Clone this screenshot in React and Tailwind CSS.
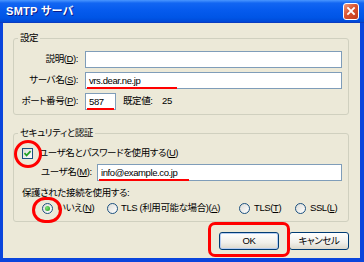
import React from 'react';

const Acc = ({ k }) => (
    <>
        (<span className="underline">{k}</span>)
    </>
);

function TextBox({ className, value, mark }) {
    return (
        <div className={`relative h-[17px] shrink-0 border border-[#7F9DB9] bg-white flex items-center pl-[3px] ${className}`}>
            <span className="leading-[12px]">{value}</span>
            {mark && <span className={`absolute left-[1px] bottom-[-1px] h-[2px] bg-[#F00] ${mark}`} />}
        </div>
    );
}

function Radio({ checked }) {
    return (
        <span className="w-[11px] h-[11px] shrink-0 rounded-full border border-[#1C5180] bg-[linear-gradient(135deg,#DCDCD7,#FFFFFF)] flex items-center justify-center">
            {checked && <span className="w-[5px] h-[5px] rounded-full bg-[radial-gradient(circle_at_35%_35%,#7BE278,#1E9A1B)]" />}
        </span>
    );
}

export default function App() {
    return (
        <div className="w-[364px] h-[262px] bg-[#0A45DC] flex flex-col text-[9.5px] text-black whitespace-nowrap [font-family:'Liberation_Sans','Noto_Sans_CJK_JP',sans-serif] [font-feature-settings:'palt']">
            {/* title bar */}
            <div className="h-[23px] shrink-0 flex items-center justify-between border-b border-[#0B3CC0] bg-[linear-gradient(to_bottom,#4A96FF_0%,#1266F2_14%,#065BEE_45%,#0055E6_80%,#0048D6_100%)]">
                <span className="pl-[6px] text-[11px] font-bold text-white tracking-[0.3px] [text-shadow:1px_1px_#0A1C8C]">SMTP サーバ</span>
                <div className="mr-[5px] w-[16px] h-[17px] rounded-[3px] border border-white bg-[linear-gradient(135deg,#F09A7E,#DA5430_45%,#C0391A)] flex items-center justify-center">
                    <svg width="10" height="10" viewBox="0 0 10 10">
                        <path d="M2 2 L8 8 M8 2 L2 8" stroke="#fff" strokeWidth="1.8" strokeLinecap="square" />
                    </svg>
                </div>
            </div>

            {/* body */}
            <div className="flex-1 ml-[3px] mr-[4px] mb-[4px] bg-[#ECE9D8] pl-[10px] pr-[11px] flex flex-col tracking-[-0.4px]">
                <fieldset className="mt-[9px] w-[336px] border border-[#D0D0BF] rounded-[3px] pt-[7px] pb-[4px] flex flex-col gap-[4px]">
                    <legend className="ml-[4px] px-[2px] leading-[12px]">設定</legend>
                    <div className="flex items-center">
                        <span className="w-[64px] shrink-0 text-right">説明<Acc k="D" />:</span>
                        <TextBox className="ml-[7px] w-[257px]" value="" />
                    </div>
                    <div className="flex items-center">
                        <span className="w-[64px] shrink-0 text-right">サーバ名<Acc k="S" />:</span>
                        <TextBox className="ml-[7px] w-[257px]" value="vrs.dear.ne.jp" mark="w-[90px]" />
                    </div>
                    <div className="flex items-center">
                        <span className="w-[64px] shrink-0 text-right">ポート番号<Acc k="P" />:</span>
                        <TextBox className="ml-[7px] w-[31px]" value="587" mark="w-[27px]" />
                        <span className="ml-[7px] w-[39px]">既定値:</span>
                        <span>25</span>
                    </div>
                </fieldset>

                <fieldset className="mt-[12px] w-[336px] border border-[#D0D0BF] rounded-[3px] pt-[7px] pb-[7px] flex flex-col">
                    <legend className="ml-[4px] px-[2px] leading-[12px]">セキュリティと認証</legend>
                    <div className="h-[14px] pl-[8px] flex items-center">
                        <span className="relative w-[11px] h-[11px] shrink-0 border border-[#1C5180] bg-[linear-gradient(135deg,#DCDCD7,#FFFFFF)] flex items-center justify-center">
                            <svg width="9" height="9" viewBox="0 0 9 9">
                                <path d="M1.5 4.2 L3.6 6.4 L7.6 2.2" fill="none" stroke="#21A121" strokeWidth="1.7" />
                            </svg>
                            <span className="absolute left-[-9px] top-[-9px] w-[28px] h-[28px] rounded-full border-[3px] border-[#F00]" />
                        </span>
                        <span className="ml-[6px]">ユーザ名とパスワードを使用する<Acc k="U" /></span>
                    </div>
                    <div className="mt-[4px] pl-[27px] flex items-center">
                        <span className="w-[56px] shrink-0">ユーザ名<Acc k="M" />:</span>
                        <TextBox className="w-[245px]" value="info@example.co.jp" mark="w-[90px]" />
                    </div>
                    <div className="mt-[6px] h-[12px] pl-[8px] flex items-center">保護された接続を使用する:</div>
                    <div className="mt-[3px] h-[12px] pl-[28px] flex items-center">
                        <div className="w-[65px] shrink-0 flex items-center gap-[4px]">
                            <span className="relative">
                                <Radio checked />
                                <span className="absolute left-[-10px] top-[-6px] w-[30px] h-[26px] rounded-full border-[3px] border-[#F00]" />
                            </span>
                            <span>いいえ<Acc k="N" /></span>
                        </div>
                        <div className="w-[132px] shrink-0 flex items-center gap-[3px]">
                            <Radio />
                            <span>TLS (利用可能な場合)<Acc k="A" /></span>
                        </div>
                        <div className="w-[56px] shrink-0 flex items-center gap-[4px]">
                            <Radio />
                            <span>TLS<Acc k="T" /></span>
                        </div>
                        <div className="flex items-center gap-[4px]">
                            <Radio />
                            <span>SSL<Acc k="L" /></span>
                        </div>
                    </div>
                </fieldset>

                <div className="mt-[10px] flex justify-end gap-[10px]">
                    <div className="relative">
                        <button className="w-[60px] h-[18px] rounded-[3px] border border-[#003C74] bg-[linear-gradient(to_bottom,#FFFFFF,#F0EFEA_60%,#DCD8CC)] shadow-[inset_0_0_0_1px_#B5CCF2] leading-none">OK</button>
                        <span className="absolute left-[-11px] top-[-10px] w-[82px] h-[35px] rounded-[7px] border-[3px] border-[#F00]" />
                    </div>
                    <button className="w-[60px] h-[18px] rounded-[3px] border border-[#003C74] bg-[linear-gradient(to_bottom,#FFFFFF,#F0EFEA_60%,#DCD8CC)] leading-none">キャンセル</button>
                </div>
            </div>
        </div>
    );
}
